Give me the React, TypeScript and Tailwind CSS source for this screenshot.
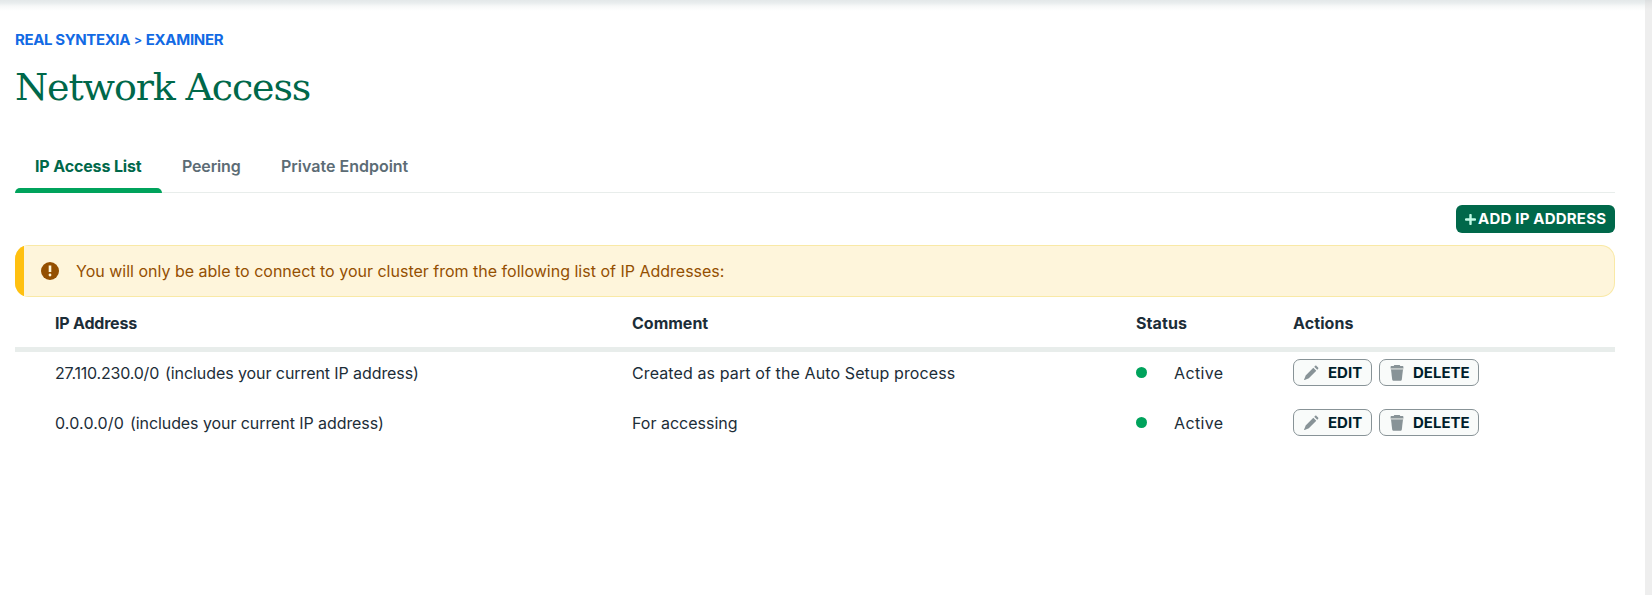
type Entry = {
  address: string;
  addressClass: string;
  comment: string;
  commentClass: string;
};

const entries: Entry[] = [
  {
    address: "27.110.230.0/0",
    addressClass: "tracking-[-0.2px]",
    comment: "Created as part of the Auto Setup process",
    commentClass: "tracking-[0.11px]",
  },
  {
    address: "0.0.0.0/0",
    addressClass: "tracking-[0.15px]",
    comment: "For accessing",
    commentClass: "tracking-[0px]",
  },
];

const columns = "grid grid-cols-[577px_504px_157px_1fr] items-center pl-10";

function PencilIcon() {
  return (
    <svg className="h-4 w-4 shrink-0" viewBox="0 0 16 16" fill="#889397">
      <path d="M10.300 2.700l3 3-7.500 7.500c-.2.2-.4.3-.6.400l-3.500 1.400c-.4.100-.8-.200-.600-.600l1.400-3.500c.1-.2.2-.4.4-.600z" />
      <path d="M11.200 1.800l.9-.9c.4-.4 1-.4 1.400 0l1.600 1.600c.4.4.4 1 0 1.400l-.9.900z" />
    </svg>
  );
}

function TrashIcon() {
  return (
    <svg className="h-4 w-[14px] shrink-0" viewBox="0 0 14 16" fill="#889397">
      <path d="M4.3 0h5.4l.6 1h2.1c.6 0 1 .4 1 1v1.200H.6V2c0-.6.4-1 1-1h2.100z" />
      <path d="M.6 3h12.800v1.500H.6z" fill="#c1c7c6" />
      <path d="M1 4.500h12l-1.200 10c-.1.800-.7 1.300-1.500 1.300H3.700c-.8 0-1.400-.5-1.500-1.300z" />
    </svg>
  );
}

function WarningIcon() {
  return (
    <svg className="h-[18px] w-[18px]" viewBox="0 0 18 18">
      <circle cx="9" cy="9" r="9" fill="#944f01" />
      <path d="M7.700 3.400h2.600v6.700H7.700z" fill="#fef7db" />
      <circle cx="9" cy="13" r="1.400" fill="#fef7db" />
    </svg>
  );
}

const actionClass =
  "flex h-[27px] items-center rounded-[7px] border border-[#889397] bg-[#f9fbfa] text-[15px] font-bold text-[#001e2b]";

export default function App() {
  return (
    <div className="flex h-[595px] w-[1652px] overflow-hidden bg-white font-['Inter',sans-serif] text-base text-[#1c2d38]">
      <main className="flex w-[1645px] flex-col bg-[linear-gradient(to_bottom,#e3e8e9_0px,#e9edee_3px,#f6f8f8_6px,#ffffff_11px)] pl-[15px] pr-[30px]">
        <nav className="mt-[29px] flex h-[22px] items-center text-[15px] font-bold tracking-[-0.39px] whitespace-pre text-[#126ae4]">
          <a>REAL SYNTEXIA</a>
          <span className="mx-1 text-[12px] font-bold">&gt;</span>
          <a className="tracking-[-0.3px]">EXAMINER</a>
        </nav>
        <h1 className="mt-[11px] flex h-[50px] items-center font-['DejaVu_Serif',serif] text-[38px] tracking-[-1.15px] text-[#00684a]">
          Network Access
        </h1>

        <div className="mt-[27px] flex h-[54px] border-b border-[#e8edeb] font-semibold text-[#5c6c75]">
          <div className="-mb-px flex w-[147px] flex-col text-[#00684a]">
            <span className="mt-[15px] pl-5 font-bold leading-6 tracking-[-0.14px]">
              IP Access List
            </span>
            <span className="mt-auto h-[5px] rounded-t-[5px] bg-[#00a35c]" />
          </div>
          <span className="mt-[15px] ml-5 w-[99px] leading-6 tracking-[-0.15px]">Peering</span>
          <span className="mt-[15px] leading-6">Private Endpoint</span>
        </div>

        <button className="mt-3 flex h-7 w-[159px] items-center self-end rounded-md bg-[#00684a] pt-px pl-[9px] text-[15px] font-bold tracking-[0.2px] whitespace-nowrap text-white">
          <svg className="mr-0.5 h-[11px] w-[11px] shrink-0" viewBox="0 0 11 11">
            <path d="M5.500 1v9M1 5.500h9" stroke="#c0fae6" strokeWidth="2.400" strokeLinecap="round" />
          </svg>
          ADD IP ADDRESS
        </button>

        <div className="mt-3 flex h-[52px] overflow-hidden rounded-[14px] bg-[#f9e9a6]">
          <div className="w-[9px] bg-[#ffc010]" />
          <div className="my-px mr-px flex flex-1 items-center rounded-r-[13px] bg-[#fef5db] pl-[17px] text-[#944f01]">
            <WarningIcon />
            <span className="ml-[17px]">
              You will only be able to connect to your cluster from the following list of IP Addresses:
            </span>
          </div>
        </div>

        <div className={`${columns} h-[55px] border-b-[5px] border-[#e8edeb] pt-px font-bold`}>
          <span className="tracking-[-0.2px]">IP Address</span>
          <span>Comment</span>
          <span className="tracking-[0.1px]">Status</span>
          <span className="tracking-[0.1px]">Actions</span>
        </div>

        <div className="flex flex-col gap-[9px]">
          {entries.map((entry) => (
            <div key={entry.address} className={`${columns} h-[41px]`}>
              <div className="flex gap-[6px]">
                <span className={entry.addressClass}>{entry.address}</span>
                <span className="tracking-[-0.08px]">(includes your current IP address)</span>
              </div>
              <span className={entry.commentClass}>{entry.comment}</span>
              <div className="flex items-center">
                <span className="h-[11px] w-[11px] rounded-full bg-[#00a35c]" />
                <span className="ml-[27px] tracking-[0.35px]">Active</span>
              </div>
              <div className="flex gap-[7px]">
                <button className={`${actionClass} w-[79px] gap-[9px] pl-[9px]`}>
                  <PencilIcon />
                  <span className="pt-px">EDIT</span>
                </button>
                <button className={`${actionClass} w-[100px] gap-[9px] pl-[10px]`}>
                  <TrashIcon />
                  <span className="pt-px">DELETE</span>
                </button>
              </div>
            </div>
          ))}
        </div>
      </main>
      <div className="w-[7px] bg-[linear-gradient(to_bottom,#dcdfe0_0px,#e6e7e7_4px,#eeeeee_10px)]" />
    </div>
  );
}
